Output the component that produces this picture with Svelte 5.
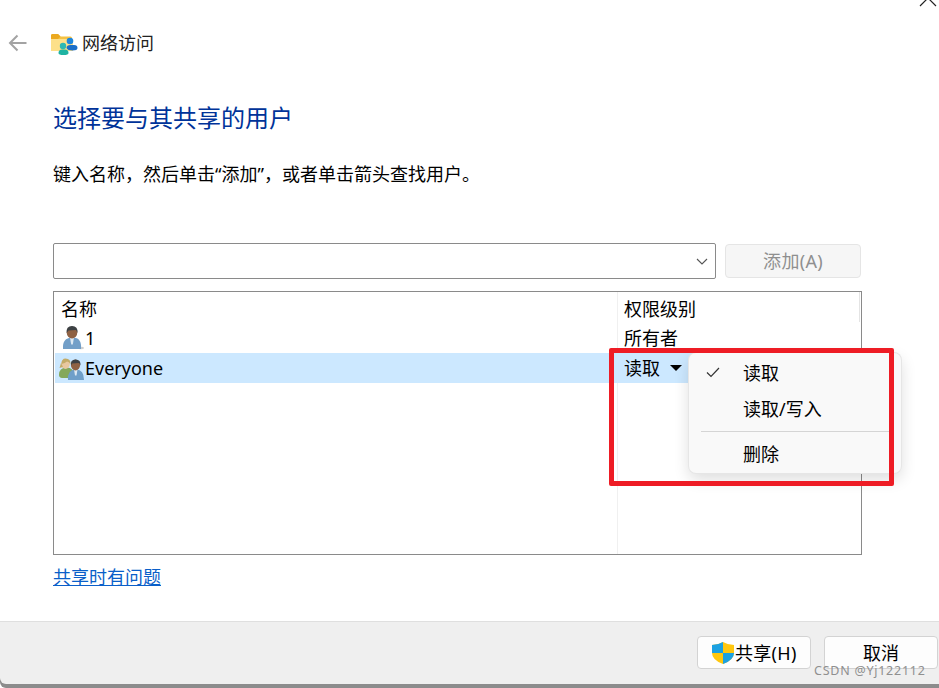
<script>
  const rows = [
    { id: 'owner', name: '1', level: '所有者' },
    { id: 'everyone', name: 'Everyone', level: '读取', selected: true }
  ];
</script>

<div class="dialog">
  <svg class="close" width="20" height="10" viewBox="0 0 20 10"><path d="M1 9 L9 1 L17 9" transform="translate(0 -3)" fill="none" stroke="#222" stroke-width="1.2"/></svg>

  <header class="topbar">
    <svg class="back" width="20" height="18" viewBox="0 0 20 18"><path d="M18.5 9H2M9.5 1.5 2 9l7.5 7.5" fill="none" stroke="#a3a3a3" stroke-width="2"/></svg>
    <svg class="folder" width="27" height="24" viewBox="0 0 27 24">
      <path d="M0 4.500q0-1.500 1.500-1.500H7l2.500 2.500h10q1.500 0 1.500 1.500v13H1.500Q0 20 0 18.500z" fill="#f5c243"/>
      <path d="M0 8h22v12H1.500Q0 20 0 18.500z" fill="#fde08a"/>
      <path d="M0 4.500q0-1.500 1.500-1.500H7l2.500 2.500L7 8H0z" fill="#eba91f"/>
      <circle cx="19" cy="10" r="3.300" fill="#1f86dc"/>
      <path d="M15.500 17q0-3 4-3h3.500q3.500 0 3.500 3 0 2.500-5 2.500t-6-2.500z" fill="#1a6ec8"/>
      <circle cx="12" cy="15" r="3.200" fill="#2bb8b4"/>
      <path d="M7.500 22q0-3.500 3.500-3.500h3q3.500 0 3.500 3.500 0 2-5 2t-5-2z" fill="#1fb3a2"/>
    </svg>
    <span class="app-title">网络访问</span>
  </header>

  <main class="body">
    <h1>选择要与其共享的用户</h1>
    <p class="hint">键入名称，然后单击“添加”，或者单击箭头查找用户。</p>

    <div class="add-row">
      <div class="combo">
        <svg width="12" height="7" viewBox="0 0 12 7"><path d="M1 1l5 5 5-5" fill="none" stroke="#555" stroke-width="1.100"/></svg>
      </div>
      <button class="add" disabled>添加(A)</button>
    </div>

    <div class="list">
      <div class="row head">
        <div class="col-name">名称</div>
        <div class="col-level">权限级别</div>
      </div>
      {#each rows as row (row.id)}
        <div class="row" class:selected={row.selected}>
          <div class="col-name">
            {#if row.selected}
              <svg width="26" height="24" viewBox="0 0 26 24">
                <path d="M0 19q0-7.500 7.500-7.500t7.500 7.500v3H3q-3-.500-3-3z" fill="#84a85c"/>
                <ellipse cx="6.500" cy="8" rx="4.300" ry="5" fill="#e8c7a0"/>
                <path d="M6.500 2.500q5.500 0 5 6-1.500-3-3.500-3-2 1.500-5.500 2.500 0-5.500 4-5.500z" fill="#c3ab68"/>
                <path d="M2 7l-1.500 5 3.500-1z" fill="#c3ab68"/>
                <path d="M9 24q-1-10 7.500-10.500T25 24z" fill="#6f9fc9"/>
                <path d="M15 13.500h3.500l-1 6h-1.500z" fill="#dce8f2"/>
                <ellipse cx="16.500" cy="9" rx="4.600" ry="5.400" fill="#8f6244"/>
                <path d="M16.500 3.500q5.500 0 5 6l-1.500-2.500-7 .5-1 2q-.800-6 4.500-6z" fill="#3d4144"/>
              </svg>
            {:else}
              <svg width="26" height="24" viewBox="0 0 26 24">
                <ellipse cx="22" cy="22" rx="3" ry="1.300" fill="#cfcfcf"/>
                <path d="M4 23q-1-11 9-11.500t9 11.500z" fill="#729fc8"/>
                <path d="M11 11.500h4l-1.200 7h-1.600z" fill="#dce8f2"/>
                <ellipse cx="13" cy="6.500" rx="5.300" ry="6" fill="#8f6244"/>
                <path d="M13 0q6 0 5.600 7L17 4 9.500 4.500 7.600 7Q7 0 13 0z" fill="#3d4144"/>
              </svg>
            {/if}
            <span>{row.name}</span>
          </div>
          <div class="col-level">
            <span>{row.level}</span>
            {#if row.selected}<i class="caret"></i>{/if}
          </div>
        </div>
      {/each}
    </div>

    <a class="trouble" href="#trouble">共享时有问题</a>
  </main>

  <footer class="actions">
    <button class="btn share">
      <svg width="24" height="24" viewBox="0 0 24 24">
        <path d="M12 1q5 3 11 3v8q0 7-11 11Q1 19 1 12V4q6 0 11-3z" fill="#ffc70e"/>
        <path d="M12 1v11H1V4q6 0 11-3z" fill="#1ba1e2"/>
        <path d="M12 12h11q0 7-11 11z" fill="#1ba1e2"/>
      </svg>
      <span>共享(H)</span>
    </button>
    <button class="btn">取消</button>
  </footer>

  <div class="menu">
    <div class="item">
      <svg class="check" width="14" height="11" viewBox="0 0 14 11"><path d="M1 5.500 5 9.500 13 1" fill="none" stroke="#333" stroke-width="1.200"/></svg>
      读取
    </div>
    <div class="item">读取/写入</div>
    <hr />
    <div class="item">删除</div>
  </div>
  <div class="annotation"></div>
  <div class="watermark">CSDN @Yj122112</div>
</div>

<style>
  :global(body) {
    background: #fff;
  }
  .dialog {
    position: relative;
    width: 939px;
    height: 688px;
    overflow: hidden;
    display: flex;
    flex-direction: column;
    background: #fff;
    color: #000;
    font-family: "Noto Sans", "Noto Sans CJK SC", sans-serif;
    font-size: 18px;
    line-height: 24px;
  }
  .close {
    position: absolute;
    top: 0;
    left: 919px;
  }
  .topbar {
    display: flex;
    align-items: center;
    height: 28px;
    margin-top: 29px;
    padding-left: 8px;
  }
  .folder {
    margin-left: 23px;
  }
  .app-title {
    margin-left: 4px;
    font-size: 18px;
    color: #222;
  }
  .body {
    flex: 1;
    display: flex;
    flex-direction: column;
    padding: 0 77px 0 53px;
  }
  h1 {
    margin: 45px 0 0;
    font-size: 24px;
    line-height: 32px;
    font-weight: 400;
    color: #003399;
  }
  .hint {
    margin: 28px 0 0;
    font-size: 18px;
  }
  .add-row {
    display: flex;
    align-items: center;
    gap: 9px;
    margin-top: 57px;
  }
  .combo {
    box-sizing: border-box;
    width: 663px;
    height: 36px;
    display: flex;
    align-items: center;
    justify-content: flex-end;
    padding-right: 7px;
    border: 1px solid #8a8a8a;
    border-radius: 2px;
  }
  .add {
    box-sizing: border-box;
    width: 136px;
    height: 34px;
    padding: 0;
    border: 1px solid #e5e5e5;
    border-radius: 4px;
    background: #f6f6f6;
    color: #8f8f8f;
    font: inherit;
    letter-spacing: 0.300px;
  }
  .list {
    box-sizing: border-box;
    width: 809px;
    height: 264px;
    margin-top: 12px;
    padding: 1px;
    border: 1px solid #8a8a8a;
    background:
      linear-gradient(#f0f0f0, #f0f0f0) no-repeat 563px 0 / 1px 100%,
      linear-gradient(#e4e4e4, #e4e4e4) no-repeat 805px 0 / 1px 30px;
  }
  .row {
    display: flex;
    height: 30px;
    align-items: center;
  }
  .row.head {
    height: 31px;
    margin-bottom: -1px;
  }
  .row.selected {
    background: #cce8ff;
  }
  .col-name {
    width: 562px;
    flex: none;
    display: flex;
    align-items: center;
    padding-left: 4px;
    box-sizing: border-box;
  }
  .head .col-name {
    padding-left: 6px;
  }
  .col-level {
    display: flex;
    align-items: center;
    padding-left: 7px;
  }
  .caret {
    width: 0;
    height: 0;
    margin-left: 10px;
    border: 6px solid transparent;
    border-top: 6px solid #000;
    border-bottom: 0;
  }
  .trouble {
    margin-top: 10px;
    width: fit-content;
    color: #0a5fc9;
    text-decoration: underline;
    font-size: 18px;
  }
  .actions {
    box-sizing: border-box;
    height: 63px;
    margin-bottom: 4px;
    display: flex;
    justify-content: flex-end;
    gap: 13px;
    padding: 14px 1px 0 0;
    background: #efefef;
    border-top: 1px solid #dfdfdf;
    border-bottom-left-radius: 6px;
    box-shadow: 0 4px 0 #8c8c8c;
  }
  .btn {
    box-sizing: border-box;
    width: 114px;
    height: 33px;
    display: flex;
    align-items: center;
    justify-content: center;
    padding: 0;
    border: 1px solid #d3d3d3;
    border-radius: 4px;
    background: #fdfdfd;
    color: #000;
    font: inherit;
  }
  .btn.share {
    justify-content: flex-start;
    padding-left: 13px;
    letter-spacing: 0.300px;
  }
  .menu {
    position: absolute;
    top: 353px;
    left: 689px;
    box-sizing: border-box;
    width: 212px;
    height: 120px;
    padding-top: 2px;
    background: #f9f9f9;
    border-radius: 7px;
    box-shadow: 0 0 0 1px #e6e6e6, 0 6px 16px rgba(0, 0, 0, 0.14);
  }
  .item {
    position: relative;
    height: 36px;
    line-height: 36px;
    padding-left: 54px;
  }
  .check {
    position: absolute;
    left: 17px;
    top: 12px;
  }
  hr {
    margin: 4px 12px;
    border: 0;
    border-top: 1px solid #d5d5d5;
  }
  .annotation {
    position: absolute;
    top: 348px;
    left: 609px;
    box-sizing: border-box;
    width: 285px;
    height: 138px;
    border: 5px solid #ee1c25;
    border-radius: 2px;
  }
  .watermark {
    position: absolute;
    left: 814px;
    top: 662px;
    font-size: 12.500px;
    line-height: 18px;
    letter-spacing: 0.750px;
    color: #8f8f8f;
  }
</style>
